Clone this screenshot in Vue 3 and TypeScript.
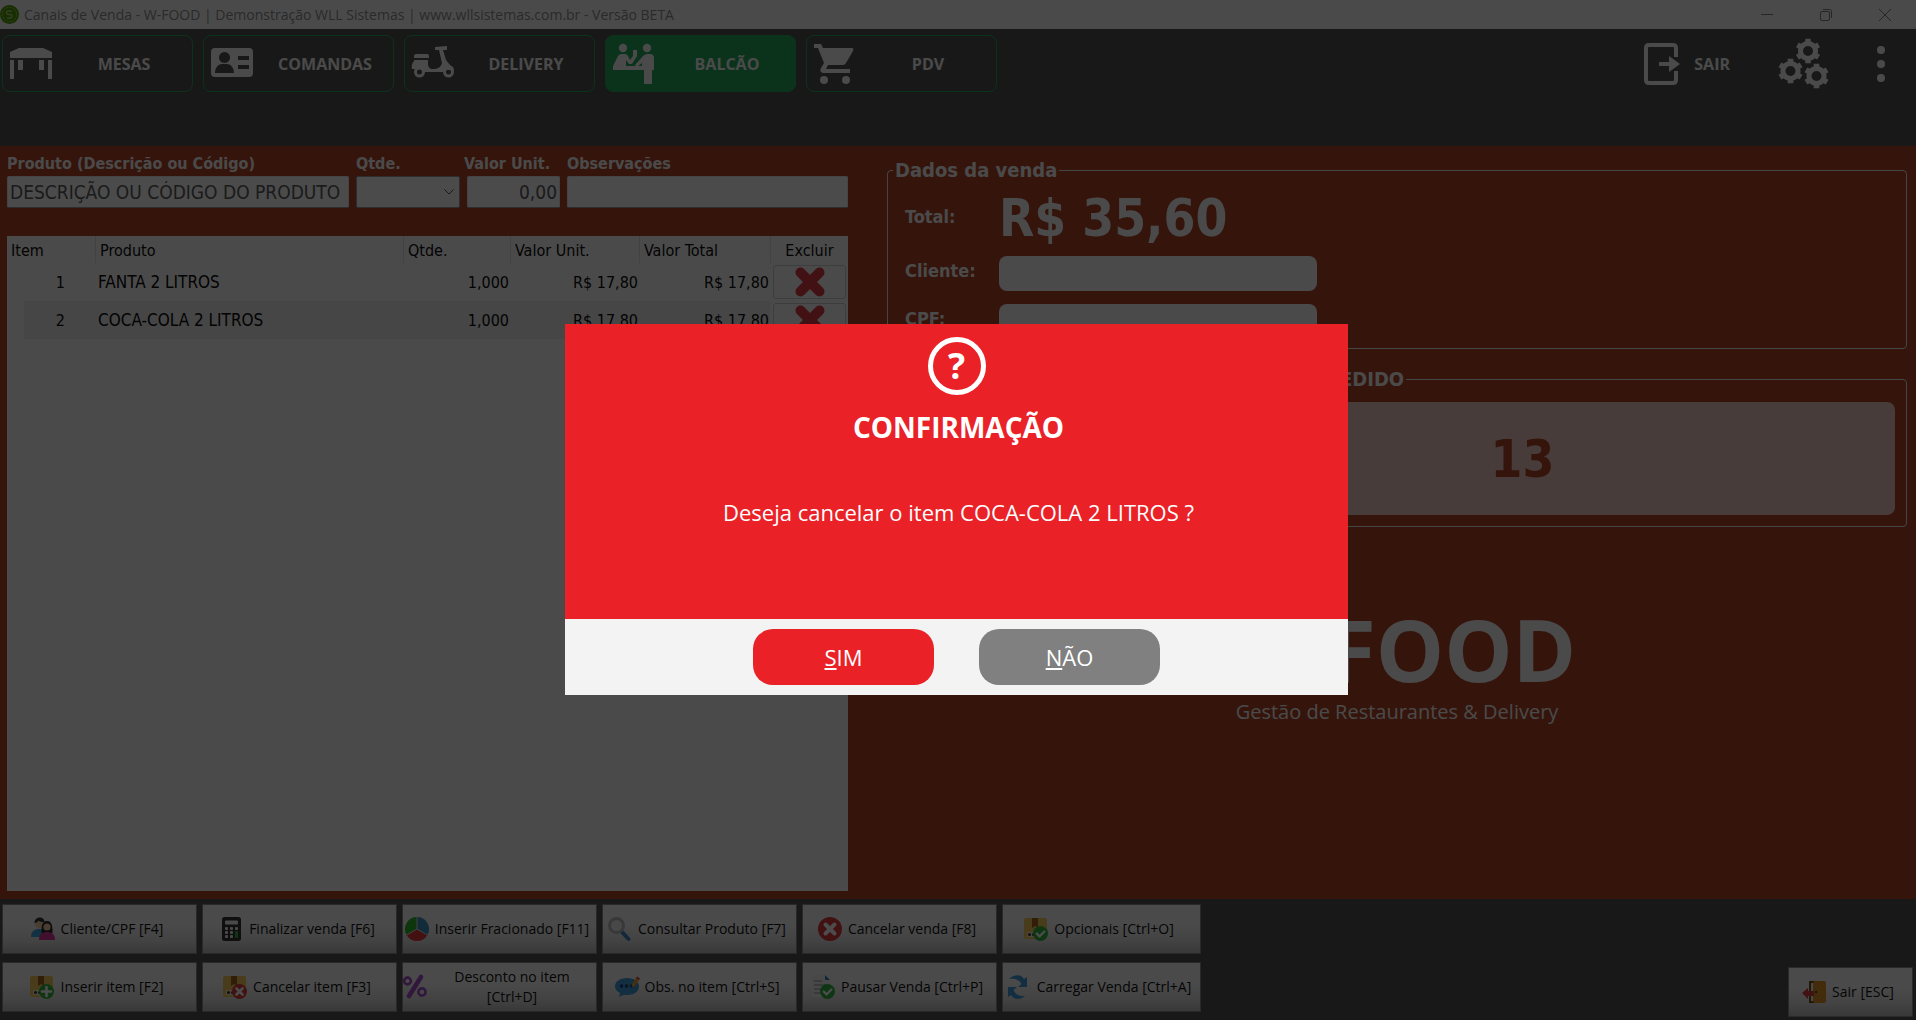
<script setup lang="ts">
import { ref } from 'vue'

interface Action {
  label: string
  icon: string
  wrap?: boolean
}

interface Item {
  n: number
  product: string
  qty: string
  unit: string
  total: string
}

const box =
  '<rect x="0" y="1" width="23" height="21" rx="2" fill="#f0c95c"/><path d="M8 1h6v10l-3-2-3 2z" fill="#a8661c"/><rect x="3" y="15" width="9" height="5" rx="1" fill="#f7ecd0"/><circle cx="5.5" cy="17.5" r="1.5" fill="#333"/><circle cx="9.5" cy="17.5" r="1.5" fill="#333"/>'
const check =
  '<circle cx="16.5" cy="16.5" r="7.5" fill="#2fb53c"/><path d="M12.8 16.6l2.8 2.8 4.8-4.9" fill="none" stroke="#fff" stroke-width="2.4" stroke-linecap="round"/>'

const icons: Record<string, string> = {
  people:
    '<path d="M0 20c0-6 4-8 8-8s8 2 8 8z" fill="#3fa5dc"/><circle cx="8.5" cy="6.5" r="4.5" fill="#f6cf9f"/><path d="M3.5 6c0-4 3-5.5 5.5-5.5S13.5 2 13.5 5c-3 0-5-.5-6-1.5-1 1.5-2 2.5-4 2.5z" fill="#333"/><path d="M10.5 16c0-4-.5-12 5.5-12s5.5 8 5.5 12z" fill="#2b2b33"/><circle cx="16" cy="10" r="3.6" fill="#f6cf9f"/><path d="M8 23c0-6 3.5-8 8-8s8 2 8 8z" fill="#d9379f"/>',
  calc:
    '<rect x="3" y="0" width="19" height="24" rx="2.5" fill="#333"/><rect x="6" y="3.5" width="13" height="4" rx="1" fill="#f4f4f4"/><g fill="#f4f4f4"><rect x="6" y="10" width="3" height="3" rx="1"/><rect x="11" y="10" width="3" height="3" rx="1"/><rect x="16" y="10" width="3" height="3" rx="1"/><rect x="6" y="14" width="3" height="3" rx="1"/><rect x="11" y="14" width="3" height="3" rx="1"/><rect x="6" y="18" width="3" height="3" rx="1"/><rect x="11" y="18" width="3" height="3" rx="1"/></g><rect x="16" y="14" width="3" height="7" rx="1" fill="#2fb53c"/>',
  pie:
    '<path d="M12 12L1.6 18A12 12 0 0 1 12 0z" fill="#2db52d"/><path d="M12 12V0a12 12 0 0 1 10.4 18z" fill="#3d8fc4"/><path d="M12 12l10.4 6A12 12 0 0 1 1.6 18z" fill="#e0393c"/><path d="M12 0v12l10.4 6M12 12L1.6 18" fill="none" stroke="#ddd" stroke-width="1"/>',
  search:
    '<path d="M14 15l6.5 7" stroke="#3f87c4" stroke-width="4" stroke-linecap="round"/><circle cx="8.5" cy="8.5" r="7" fill="#f0f0f0" stroke="#bdbdbd" stroke-width="3"/>',
  cancel:
    '<circle cx="12" cy="12" r="12" fill="#dc3a3e"/><path d="M7.5 7.5l9 9m0-9l-9 9" stroke="#fff" stroke-width="4" stroke-linecap="round"/>',
  boxCheck: box + check,
  boxPlus:
    box + '<circle cx="16.5" cy="16.5" r="7.5" fill="#2fb53c"/><path d="M16.5 12v9m-4.5-4.5h9" stroke="#fff" stroke-width="2.6" stroke-linecap="round"/>',
  boxX:
    box + '<circle cx="16.5" cy="16.5" r="7.5" fill="#dc3a3e"/><path d="M13.5 13.5l6 6m0-6l-6 6" stroke="#fff" stroke-width="2.6" stroke-linecap="round"/>',
  percent:
    '<g fill="none" stroke="#a84fc9" stroke-linecap="round"><circle cx="4.5" cy="6" r="3.4" stroke-width="2.6"/><circle cx="19" cy="17" r="3.6" stroke-width="2.6"/><path d="M18 2L6 21" stroke-width="4.6"/></g>',
  chat:
    '<path d="M12 3c7 0 12 3.5 12 8.5S19 20 12 20c-1 0-2 0-3-.3L4 22l1-4C2 16.5 0 14.5 0 11.5 0 6.5 5 3 12 3z" fill="#3f9bd8"/><g fill="#123f73"><circle cx="6.5" cy="11" r="1.7"/><circle cx="11.5" cy="11" r="1.7"/><circle cx="16.5" cy="11" r="1.7"/></g><path d="M17 9l4-6 3 2-4 6-3.5 1z" fill="#f29f2c"/><path d="M21 3l1-1.5 3 2L24 5z" fill="#dc3a3e"/>',
  doc:
    '<path d="M1 0h13l5 5v17H1z" fill="#f1f1f1"/><path d="M14 0v5h5z" fill="#3f87c4"/><path d="M3 6h8M3 10h12M3 14h8M3 18h6" stroke="#8d8d8d" stroke-width="1.2"/>' + check,
  refresh:
    '<g fill="#3f9bd8"><path d="M2 4C8-2 15 0 17 4l3-2v10h-9l3.5-3C12 4 7 3 2 4z"/><path d="M18 21c-6 5-12 3-14-1l-3 2V12h9l-3.5 3c2 5 6.5 6.5 11.5 6z"/></g>',
  door:
    '<path d="M8 2h8v20H8z" fill="#f4f4f4" stroke="#7a4a18" stroke-width="2"/><rect x="11" y="1" width="13" height="22" rx="2" fill="#dd9428"/><circle cx="14" cy="12" r="1.2" fill="#6a4214"/><path d="M0 13l6-5v3h6v5H6v3z" fill="#dc3a3e"/>',
}

const firstRow: Action[] = [
  { label: 'Cliente/CPF [F4]', icon: 'people' },
  { label: 'Finalizar venda [F6]', icon: 'calc' },
  { label: 'Inserir Fracionado [F11]', icon: 'pie' },
  { label: 'Consultar Produto [F7]', icon: 'search' },
  { label: 'Cancelar venda [F8]', icon: 'cancel' },
  { label: 'Opcionais [Ctrl+O]', icon: 'boxCheck' },
]
const secondRow: Action[] = [
  { label: 'Inserir item [F2]', icon: 'boxPlus' },
  { label: 'Cancelar item [F3]', icon: 'boxX' },
  { label: 'Desconto no item [Ctrl+D]', icon: 'percent', wrap: true },
  { label: 'Obs. no item [Ctrl+S]', icon: 'chat' },
  { label: 'Pausar Venda [Ctrl+P]', icon: 'doc' },
  { label: 'Carregar Venda [Ctrl+A]', icon: 'refresh' },
]
const actions = [...firstRow, ...secondRow]

const channels = [
  {
    label: 'MESAS',
    icon: '<path d="M0 9l9-4h24l9 4v6H0zM0 17h4v19H0zM38 17h4v19h-4zM8 17h5v10H8zM29 17h5v10h-5z"/>',
  },
  {
    label: 'COMANDAS',
    icon: '<path fill-rule="evenodd" d="M4 5h34a4 4 0 0 1 4 4v21a4 4 0 0 1-4 4H4a4 4 0 0 1-4-4V9a4 4 0 0 1 4-4zM13.5 9a5.5 5.5 0 1 0 .01 0zM4 30h19c0-6-4-9-7-9h-5c-3 0-7 3-7 9zM27 13h11v4H27zM27 22h11v4H27z"/>',
  },
  {
    label: 'DELIVERY',
    icon: '<path d="M2 13q0-2 2-2h11q2 0 2 2v2H2zM2 17h14v5q1 4 4 4h3q6-1 7-6L27 7h-4V4l12-1v4h-4l3 10 4 5q4 2 4 5h-7q-3 0-4 2H11q-1-3-4-3H0q-1-5 2-8z"/><g fill="none" stroke="#f8f8f8" stroke-width="3"><circle cx="7.5" cy="29" r="4"/><circle cx="36.5" cy="29" r="4"/></g>',
  },
  {
    label: 'BALCÃO',
    active: true,
    icon: '<circle cx="10" cy="5" r="4.2"/><circle cx="34" cy="5" r="4.2"/><path d="M0 27v-4l5-10q1-2 4-2h3q2 0 3 2l2 4 3-4V7h4v6l-5 8h-3l-3-4v6h16V20l-5 4-2-2 8-9q2-2 4-2h3q4 0 4 4v12h-2v14h-8V27z"/>',
  },
  {
    label: 'PDV',
    icon: '<path d="M0 1h7l2 4h29q2 0 1 3l-7 12q-1 2-3 2H14l-2 4h24v4H9q-4-1-2-5l3-5L4 5H0z"/><circle cx="10" cy="37" r="4"/><circle cx="32" cy="37" r="4"/>',
  },
]

const columns = ['Item', 'Produto', 'Qtde.', 'Valor Unit.', 'Valor Total', 'Excluir']
const items = ref<Item[]>([
  { n: 1, product: 'FANTA 2 LITROS', qty: '1,000', unit: 'R$ 17,80', total: 'R$ 17,80' },
  { n: 2, product: 'COCA-COLA 2 LITROS', qty: '1,000', unit: 'R$ 17,80', total: 'R$ 17,80' },
])

const unitPrice = ref('0,00')

function gear(cx: number, cy: number): string {
  const points: string[] = []
  for (let i = 0; i < 6; i++) {
    const mid = (i * 60 - 90) * (Math.PI / 180)
    for (const [offset, radius] of [[-26, 10], [-16, 10], [-13, 12.6], [13, 12.6], [16, 10], [26, 10]]) {
      const a = mid + offset * (Math.PI / 180)
      points.push(`${(cx + radius * Math.cos(a)).toFixed(1)} ${(cy + radius * Math.sin(a)).toFixed(1)}`)
    }
  }
  return `M${points.join('L')}ZM${cx - 5} ${cy}a5 5 0 1 0 10 0a5 5 0 1 0 -10 0Z`
}
const gears = gear(30, 13) + gear(12.5, 33) + gear(38.5, 38)
</script>

<template>
  <div class="app">
    <header class="titlebar">
      <svg class="app-icon" viewBox="0 0 19 19" aria-hidden="true">
        <circle cx="9.5" cy="9.5" r="9.5" fill="#4f9a00" />
        <circle cx="9.5" cy="9.5" r="7.2" fill="none" stroke="#a9cf7a" stroke-width="1" stroke-dasharray="2 1" />
        <path d="M12 6H8q-1.5 0-1.5 1.7T8 9.5h2.5q1.5 0 1.5 1.7T10.5 13H7" fill="none" stroke="#a9cf7a" stroke-width="1.5" />
      </svg>
      <span class="window-title">Canais de Venda - W-FOOD | Demonstração WLL Sistemas | www.wllsistemas.com.br - Versão BETA</span>
      <div class="window-controls">
        <button type="button" aria-label="Minimizar"><svg viewBox="0 0 12 12"><path d="M0 5.5h12" /></svg></button>
        <button type="button" aria-label="Restaurar"><svg viewBox="0 0 12 12"><rect x=".5" y="2.5" width="9" height="9" rx="1.5" /><path d="M3 .5h6.5q2 0 2 2V9" /></svg></button>
        <button type="button" aria-label="Fechar"><svg viewBox="0 0 12 12"><path d="M0 0l12 12M12 0L0 12" /></svg></button>
      </div>
    </header>

    <nav class="topnav">
      <button v-for="c in channels" :key="c.label" type="button" class="channel" :class="{ active: c.active }">
        <svg viewBox="0 0 42 42" aria-hidden="true" v-html="c.icon"></svg>
        <span>{{ c.label }}</span>
      </button>
      <div class="nav-tools">
        <button type="button" class="exit">
          <svg viewBox="0 0 36 42" aria-hidden="true">
            <path d="M32 14V5q0-3-3-3H5Q2 2 2 5v32q0 3 3 3h24q3 0 3-3v-9" fill="none" stroke="#f8f8f8" stroke-width="4" />
            <path d="M15 19h10v-6l11 8-11 8v-6H15z" />
          </svg>
          <span>SAIR</span>
        </button>
        <button type="button" class="settings" aria-label="Configurações">
          <svg viewBox="0 0 51 51"><path fill-rule="evenodd" :d="gears" /></svg>
        </button>
        <button type="button" class="more" aria-label="Mais opções">
          <svg viewBox="0 0 8 36"><circle cx="4" cy="4" r="4" /><circle cx="4" cy="18" r="4" /><circle cx="4" cy="32" r="4" /></svg>
        </button>
      </div>
    </nav>

    <main class="content">
      <section class="sale">
        <form class="entry" @submit.prevent>
          <div class="field">
            <label for="product">Produto (Descrição ou Código)</label>
            <input id="product" type="text" placeholder="DESCRIÇÃO OU CÓDIGO DO PRODUTO" />
          </div>
          <div class="field">
            <label for="qty">Qtde.</label>
            <div class="select-wrap">
              <select id="qty"><option></option></select>
              <svg viewBox="0 0 10 6" aria-hidden="true"><path d="M.5 .5L5 5 9.5 .5" /></svg>
            </div>
          </div>
          <div class="field">
            <label for="unit" class="tight">Valor Unit.</label>
            <input id="unit" v-model="unitPrice" type="text" class="right" />
          </div>
          <div class="field">
            <label for="obs">Observações</label>
            <input id="obs" type="text" />
          </div>
        </form>

        <div class="grid">
          <table>
            <colgroup>
              <col class="c-item" /><col class="c-product" /><col class="c-qty" />
              <col class="c-unit" /><col class="c-total" /><col class="c-delete" />
            </colgroup>
            <thead>
              <tr><th v-for="c in columns" :key="c" scope="col">{{ c }}</th></tr>
            </thead>
            <tbody>
              <tr v-for="item in items" :key="item.n">
                <td class="num index">{{ item.n }}</td>
                <td class="product">{{ item.product }}</td>
                <td class="num">{{ item.qty }}</td>
                <td class="num">{{ item.unit }}</td>
                <td class="num">{{ item.total }}</td>
                <td class="action">
                  <button type="button" :aria-label="`Excluir ${item.product}`">
                    <svg viewBox="0 0 30 30"><path d="M5.5 5.5l19 19m0-19l-19 19" /></svg>
                  </button>
                </td>
              </tr>
            </tbody>
          </table>
        </div>
      </section>

      <section class="summary">
        <fieldset class="sale-data">
          <legend>Dados da venda</legend>
          <div class="line total"><span>Total:</span><strong>R$ 35,60</strong></div>
          <div class="line"><label for="client">Cliente:</label><input id="client" type="text" /></div>
          <div class="line"><label for="cpf">CPF:</label><input id="cpf" type="text" /></div>
        </fieldset>
        <fieldset class="order">
          <legend>NÚMERO DO PEDIDO</legend>
          <output>13</output>
        </fieldset>
        <div class="brand">
          <h1>W-FOOD</h1>
          <p>Gestão de Restaurantes &amp; Delivery</p>
        </div>
      </section>
    </main>

    <footer class="actions">
      <div class="action-grid">
        <button v-for="a in actions" :key="a.label" type="button" class="tool" :class="{ wrap: a.wrap }">
          <svg viewBox="0 0 24 24" aria-hidden="true" v-html="icons[a.icon]"></svg>
          <span>{{ a.label }}</span>
        </button>
      </div>
      <button type="button" class="tool leave">
        <svg viewBox="0 0 24 24" aria-hidden="true" v-html="icons.door"></svg>
        <span>Sair [ESC]</span>
      </button>
    </footer>

    <div class="backdrop">
      <div class="dialog" role="alertdialog" aria-modal="true" aria-labelledby="dlg-title" aria-describedby="dlg-text">
        <div class="dialog-body">
          <div class="question" aria-hidden="true">?</div>
          <h2 id="dlg-title">CONFIRMAÇÃO</h2>
          <p id="dlg-text">Deseja cancelar o item COCA-COLA 2 LITROS ?</p>
        </div>
        <div class="dialog-actions">
          <button type="button" class="yes" accesskey="s"><u>S</u>IM</button>
          <button type="button" class="no" accesskey="n"><u>N</u>ÃO</button>
        </div>
      </div>
    </div>
  </div>
</template>

<style>
body {
  margin: 0;
}
</style>

<style scoped>
.app {
  --ui: 'Open Sans', 'Noto Sans', sans-serif;
  --form: 'DejaVu Sans Condensed', 'DejaVu Sans', sans-serif;
  --light: #f8f8f8;
  --brand: #b14325;
  display: flex;
  flex-direction: column;
  min-height: 100vh;
  background: #535353;
  font-family: var(--ui);
  font-size: 14px;
}
*,
*::before {
  box-sizing: border-box;
}
button {
  padding: 0;
  border: 0;
  background: none;
  color: inherit;
  font: inherit;
}
svg {
  display: block;
  flex: none;
  overflow: visible;
}

.titlebar {
  display: flex;
  align-items: center;
  height: 29px;
  background: #f8f8f8;
  color: #8c8c8c;
}
.app-icon {
  width: 19px;
  height: 19px;
  margin-right: 5px;
}
.window-title {
  flex: 1;
  white-space: nowrap;
}
.window-controls {
  display: flex;
  gap: 47px;
  padding-right: 25px;
}
.window-controls svg {
  width: 12px;
  height: 12px;
  fill: none;
  stroke: #808080;
}

.topnav {
  display: flex;
  align-items: flex-start;
  gap: 10px;
  height: 117px;
  padding: 6px 31px 0 2px;
  color: var(--light);
  font-size: 16px;
  font-weight: 700;
}
.topnav svg {
  fill: var(--light);
}
.channel {
  display: flex;
  align-items: center;
  width: 191px;
  height: 57px;
  padding-left: 7px;
  border: 1px solid #25a75d;
  border-radius: 8px;
}
.channel svg {
  width: 42px;
  height: 42px;
}
.channel span {
  flex: 1;
  padding-left: 4px;
  text-align: center;
}
.channel.active {
  background: #25a75d;
}
.nav-tools {
  display: flex;
  align-items: center;
  height: 57px;
  margin-left: auto;
}
.exit {
  display: flex;
  align-items: center;
  gap: 14px;
}
.exit svg {
  width: 36px;
  height: 42px;
}
.settings {
  margin: 0 48px;
}
.settings svg {
  width: 51px;
  height: 51px;
}
.more svg {
  width: 8px;
  height: 36px;
}

.content {
  display: grid;
  flex: 1;
  grid-template-columns: minmax(0, 841fr) minmax(0, 1020fr);
  gap: 39px;
  padding: 8px 9px 8px 7px;
  background: var(--brand);
  font-family: var(--form);
}
.sale {
  display: flex;
  flex-direction: column;
}
.entry {
  display: grid;
  grid-template-columns: minmax(0, 342fr) minmax(0, 104fr) minmax(0, 93fr) minmax(0, 281fr);
  gap: 7px;
}
.field label {
  display: block;
  height: 22px;
  color: var(--light);
  font-size: 16px;
  font-weight: 700;
  line-height: 20px;
  white-space: nowrap;
}
.field input,
.field select {
  width: 100%;
  height: 32px;
  padding: 0 2px;
  border: 1px solid #e4e4e4;
  border-bottom-color: #999;
  border-radius: 2px;
  background: #fafafa;
  color: #5a5a5a;
  font: 19px var(--form);
}
.field input::placeholder {
  color: #5a5a5a;
  opacity: 1;
}
.field input.right {
  text-align: right;
}
.field label.tight {
  margin-left: -3px;
}
.select-wrap {
  position: relative;
}
.field select {
  border-color: #999;
  appearance: none;
}
.select-wrap svg {
  position: absolute;
  top: 13px;
  right: 6px;
  width: 10px;
  height: 6px;
  fill: none;
  stroke: #555;
  pointer-events: none;
}

.grid {
  flex: 1;
  margin-top: 28px;
  background: #f8f8f8;
}
table {
  width: 100%;
  border-spacing: 0;
  table-layout: fixed;
  color: #0a0a0a;
  font-size: 16px;
}
.c-item {
  width: 88px;
}
.c-product {
  width: 308px;
}
.c-qty {
  width: 107px;
}
.c-unit {
  width: 129px;
}
.c-total {
  width: 131px;
}
.c-delete {
  width: 78px;
}
th {
  height: 27px;
  padding: 1px 4px 0;
  border-left: 1px solid #dcdcdc;
  font-weight: 400;
  text-align: left;
}
th:first-child {
  padding-left: 3px;
  border-left-color: transparent;
}
th:last-child {
  text-align: center;
}
td {
  height: 38px;
  padding: 0 1px 0 3px;
  white-space: nowrap;
}
td.product {
  font-size: 17px;
}
.num {
  text-align: right;
}
td.index {
  padding-right: 30px;
}
tbody tr:nth-child(even) td {
  background: #e9e9e9;
}
tbody tr:nth-child(even) td.index {
  background: linear-gradient(to right, transparent 17px, #e9e9e9 17px);
}
tbody tr:nth-child(even) td.action {
  background: none;
}
.action button {
  display: grid;
  place-items: center;
  width: 73px;
  height: 34px;
  border: 1px solid #ccc;
  border-radius: 3px;
  background: #f8f8f8;
}
.action svg {
  width: 30px;
  height: 30px;
  stroke: #dd3b40;
  stroke-linecap: round;
  stroke-width: 10;
}

.summary {
  display: flex;
  flex-direction: column;
  color: var(--light);
}
fieldset {
  min-width: 0;
  margin: 0;
  border: 1px solid #e8e8e8;
  border-radius: 4px;
}
legend {
  padding: 0 2px;
  font-size: 20px;
  font-weight: 700;
  line-height: 24px;
}
.sale-data {
  height: 191px;
  margin-top: 4px;
  padding: 0 17px 8px;
}
.sale-data legend {
  margin-left: -12px;
}
.line {
  display: flex;
  align-items: center;
  height: 35px;
  margin-bottom: 13px;
}
.line label,
.line span {
  width: 94px;
  font-size: 18px;
  font-weight: 700;
}
.line label,
.line span {
  padding-bottom: 6px;
}
.line input {
  width: 318px;
  height: 35px;
  border: 0;
  border-radius: 8px;
  background: #f8f8f8;
}
.line.total {
  height: 74px;
  margin-bottom: 0;
}
.line strong,
.order output {
  font-size: 51px;
  font-weight: 700;
  line-height: 60px;
}
.order {
  align-self: flex-end;
  width: 769px;
  max-width: 100%;
  height: 160px;
  margin-top: 18px;
  padding: 11px 11px 10px;
}
.order legend {
  margin-left: 43px;
}
.order output {
  display: grid;
  place-items: center;
  height: 113px;
  padding-top: 2px;
  border-radius: 8px;
  background: #edc8c0;
  color: var(--brand);
}
.brand {
  margin-top: 72px;
  font-family: var(--ui);
  text-align: center;
}
.brand h1 {
  margin: 0;
  font-size: 86px;
  font-weight: 700;
  line-height: 100px;
}
.brand p {
  margin: 0;
  font-size: 20px;
  line-height: 26px;
}

.actions {
  display: flex;
  align-items: flex-end;
  justify-content: space-between;
  padding: 5px 3px 3px 2px;
}
.action-grid {
  display: grid;
  grid-template-columns: repeat(5, 195px) 199px;
  gap: 8px 5px;
  margin-bottom: 5px;
}
.tool {
  display: flex;
  align-items: center;
  justify-content: center;
  gap: 6px;
  height: 50px;
  padding-right: 5px;
  border: 1px solid #8a8a8a;
  background: linear-gradient(#f8f8f8 40%, #e0e0e0 75%, #bcbcbc);
  color: #111;
  line-height: 20px;
  white-space: nowrap;
}
.tool svg {
  width: 24px;
  height: 24px;
}
.tool.wrap span {
  flex: 1;
  padding: 0 16px;
  white-space: normal;
}
.leave {
  width: 125px;
}

.backdrop {
  position: fixed;
  inset: 0;
  display: grid;
  place-items: center;
  padding: 0 3px 2px 0;
  background: rgba(0, 0, 0, 0.7);
}
.dialog {
  width: 783px;
  max-width: 96vw;
  color: #fff;
  text-align: center;
}
.dialog-body {
  display: flex;
  flex-direction: column;
  align-items: center;
  height: 295px;
  padding-top: 13px;
  background: #ea2127;
}
.question {
  width: 58px;
  height: 58px;
  border: 5px solid #fff;
  border-radius: 50%;
  font-size: 36px;
  font-weight: 700;
  line-height: 48px;
}
.dialog h2 {
  margin: 14px 0 0;
  padding-left: 4px;
  font-size: 28px;
  font-weight: 700;
  line-height: 36px;
}
.dialog p {
  margin: 52px 0 0;
  padding-left: 4px;
  font-size: 22px;
  line-height: 30px;
}
.dialog-actions {
  display: flex;
  justify-content: center;
  gap: 45px;
  padding: 10px 0;
  background: #f3f3f3;
}
.dialog-actions button {
  width: 181px;
  height: 56px;
  border-radius: 20px;
  font-size: 22px;
}
.yes {
  background: #ea2127;
}
.no {
  background: #808080;
}
</style>
